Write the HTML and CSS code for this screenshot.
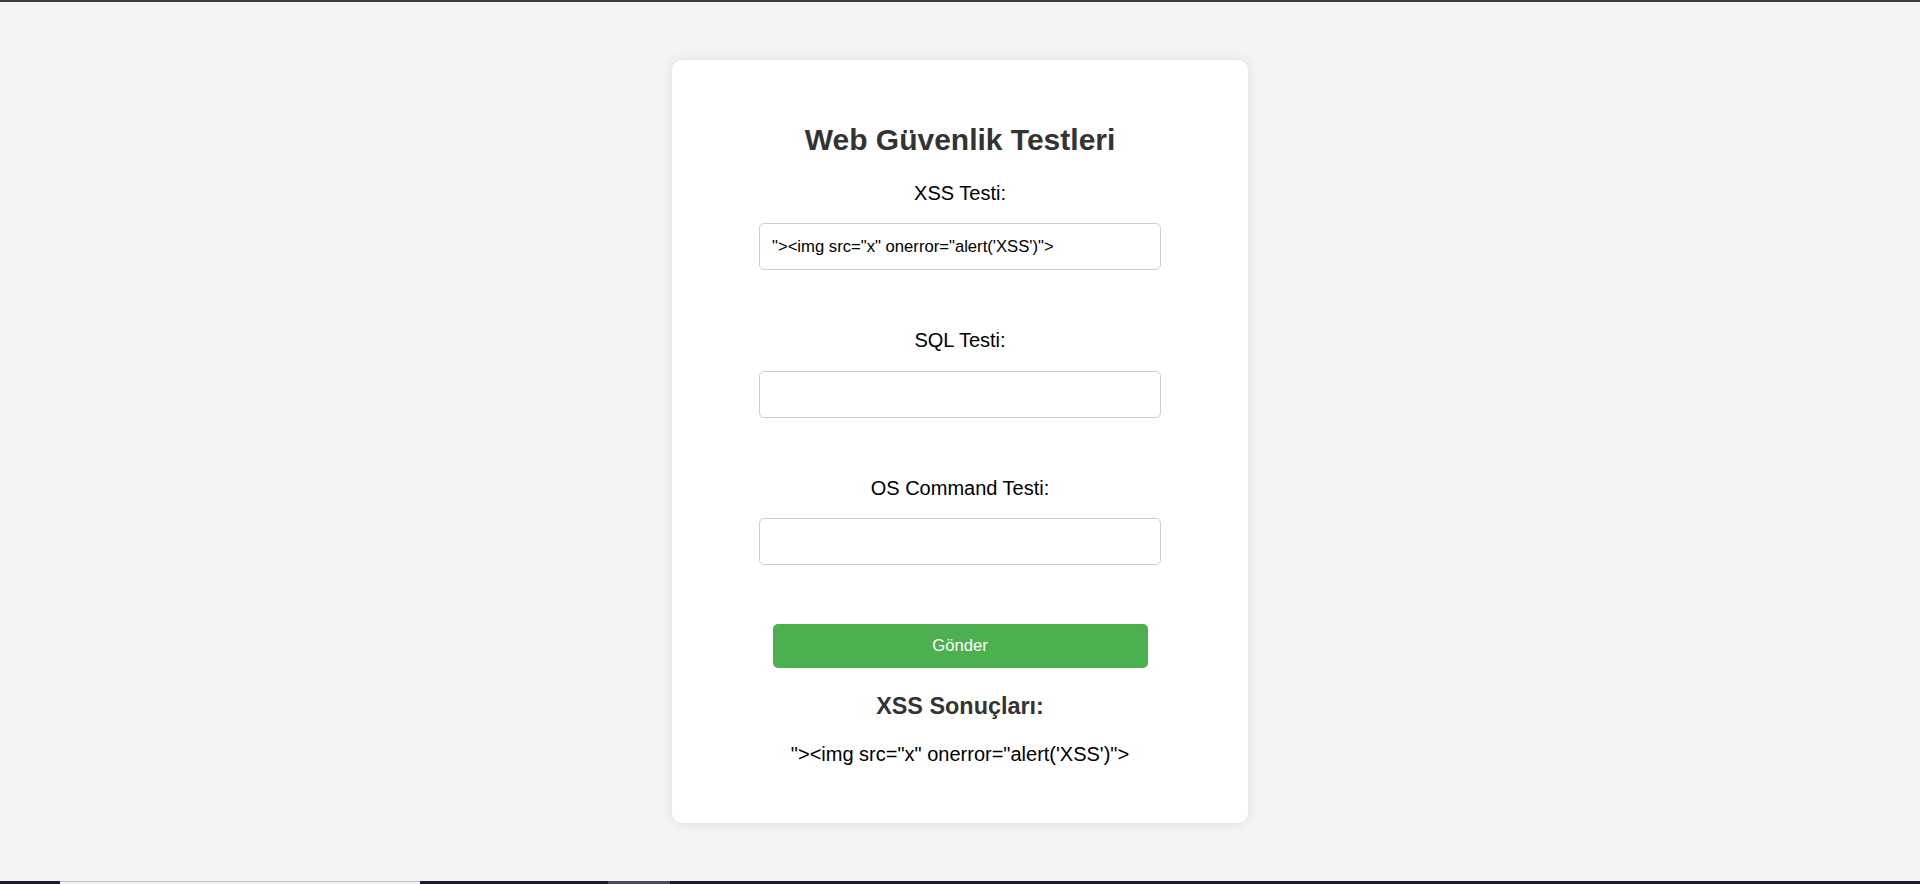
FILE: index.html
```html
<!DOCTYPE html>
<html lang="tr">
<head>
<meta charset="utf-8">
<title>Web Güvenlik Testleri</title>
<link rel="stylesheet" href="styles.css">
</head>
<body>
<div class="topline"></div>
<main class="page">
  <div class="card">
    <h2 class="title">Web Güvenlik Testleri</h2>
    <form class="form">
      <label class="label" for="xss">XSS Testi:</label>
      <input class="field" id="xss" type="text" value="&quot;&gt;&lt;img src=&quot;x&quot; onerror=&quot;alert('XSS')&quot;&gt;">
      <label class="label" for="sql">SQL Testi:</label>
      <input class="field" id="sql" type="text">
      <label class="label" for="os">OS Command Testi:</label>
      <input class="field field-last" id="os" type="text">
      <button class="submit" type="button">Gönder</button>
    </form>
    <h3 class="results-title">XSS Sonuçları:</h3>
    <p class="results">"&gt;&lt;img src="x" onerror="alert('XSS')"&gt;</p>
  </div>
</main>
<div class="taskbar">
  <div class="seg seg-dark-a"></div>
  <div class="seg seg-light"></div>
  <div class="seg seg-dark-b"></div>
  <div class="seg seg-gray"></div>
  <div class="seg seg-dark-c"></div>
</div>
</body>
</html>
```

FILE: styles.css
```css
html, body {
  margin: 0;
  padding: 0;
  height: 100%;
}

body {
  background: #f4f4f4;
  font-family: "Liberation Sans", Arial, sans-serif;
  color: #000;
  display: flex;
  flex-direction: column;
  min-height: 884px;
  height: 884px;
  overflow: hidden;
}

.topline {
  height: 2px;
  background: #3c3c3c;
  flex: none;
}

.page {
  flex: 1;
  padding-top: 58px;
}

.card {
  width: 576px;
  margin: 0 auto;
  box-sizing: border-box;
  background: #fff;
  border-radius: 10px;
  box-shadow: 0 0 12px rgba(0, 0, 0, 0.1);
  padding: 62px 0 57px;
  text-align: center;
}

.title {
  margin: 0;
  font-size: 30px;
  line-height: 36px;
  font-weight: bold;
  color: #333;
}

.form {
  display: flex;
  flex-direction: column;
  align-items: center;
  margin-top: 22.5px;
}

.label {
  display: block;
  font-size: 20px;
  line-height: 24px;
  color: #000;
  margin-bottom: 18.5px;
}

.field {
  display: block;
  box-sizing: border-box;
  width: 402px;
  height: 47px;
  margin: 0 0 58px;
  padding: 0 12px;
  border: 1px solid #cfcfcf;
  border-radius: 5px;
  background: #fff;
  font-family: "Liberation Sans", Arial, sans-serif;
  font-size: 16.67px;
  color: #000;
  outline: none;
}

.field-last {
  margin-bottom: 58.5px;
}

.submit {
  display: block;
  box-sizing: border-box;
  width: 375px;
  height: 44.5px;
  margin: 0;
  padding: 0;
  border: none;
  border-radius: 5px;
  background: #4caf50;
  color: #fff;
  font-family: "Liberation Sans", Arial, sans-serif;
  font-size: 16.67px;
  cursor: pointer;
}

.results-title {
  margin: 23.5px 0 0;
  font-size: 23.4px;
  line-height: 28px;
  font-weight: bold;
  color: #333;
}

.results {
  margin: 22px 0 0;
  font-size: 20px;
  line-height: 24px;
  color: #000;
}

.taskbar {
  flex: none;
  height: 3px;
  display: flex;
  background: #1e1c2a;
}

.seg {
  height: 3px;
}

.seg-dark-a {
  width: 60px;
  background: #1e1c2a;
}

.seg-light {
  width: 360px;
  box-sizing: border-box;
  background: #f2f2f2;
  border-top: 1px solid #c4c4c4;
}

.seg-dark-b {
  width: 188px;
  background: #1e1c2a;
}

.seg-gray {
  width: 62px;
  background: #4a4856;
}

.seg-dark-c {
  flex: 1;
  background: #1e1c2a;
}
```
